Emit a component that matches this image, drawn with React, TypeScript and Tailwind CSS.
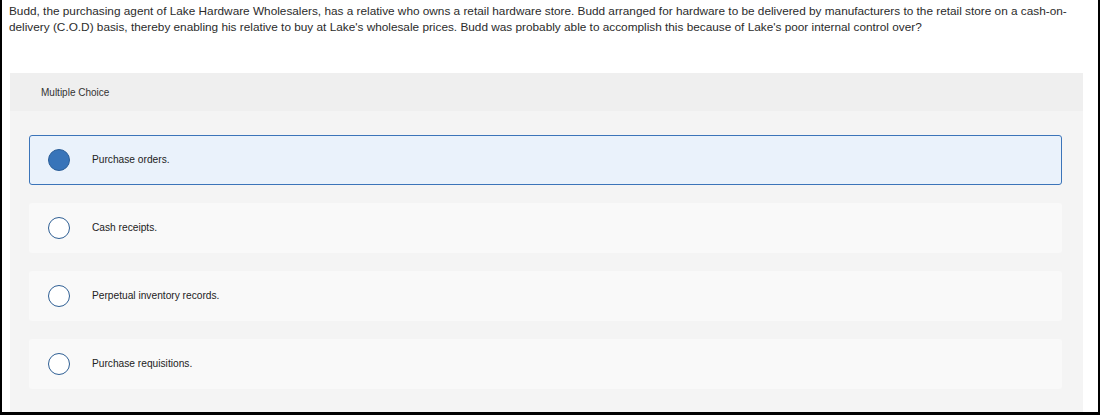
import { useState } from 'react';

const choices = [
  'Purchase orders.',
  'Cash receipts.',
  'Perpetual inventory records.',
  'Purchase requisitions.',
];

const App = () => {
  const [selected, setSelected] = useState(0);

  return (
    <div className="w-[1100px] h-[415px] overflow-hidden bg-white border-l-2 border-r-2 border-b-[3px] border-black font-['Liberation_Sans',Arial,sans-serif] text-[#333]">
      {/* Question */}
      <p className="pl-[7px] pr-[20px] pt-[3px] text-[11.8px] leading-[16px] text-[#2b2b2b]">
        Budd, the purchasing agent of Lake Hardware Wholesalers, has a relative who owns a retail hardware store. Budd arranged for hardware to be delivered by manufacturers to the retail store on a cash-on-delivery (C.O.D) basis, thereby enabling his relative to buy at Lake's wholesale prices. Budd was probably able to accomplish this because of Lake's poor internal control over?
      </p>

      {/* Answer panel */}
      <div className="mt-[38px] ml-[8px] mr-[15px] bg-[#f4f4f4] pb-6">
        <div className="h-[38px] flex items-center pl-[31px] bg-[#efefef] text-[10px] text-[#333]">
          Multiple Choice
        </div>

        <div className="flex flex-col gap-[18px] pt-[24px] pl-[19px] pr-[21px]">
          {choices.map((choice, i) => {
            const isSel = selected === i;
            return (
              <button
                key={choice}
                onClick={() => setSelected(i)}
                className={`h-[50px] flex items-center rounded-[3px] text-left ${
                  isSel ? 'bg-[#eaf2fb] border border-[#3b74b9]' : 'bg-[#f9f9f9] border border-transparent'
                }`}
              >
                <span
                  className={`ml-[18px] w-[22px] h-[22px] rounded-full shrink-0 border-[1.5px] ${
                    isSel ? 'bg-[#3874b9] border-[#2b5e98]' : 'bg-white border-[#2f5f94]'
                  }`}
                />
                <span className="ml-[22px] text-[10.2px] text-[#222]">{choice}</span>
              </button>
            );
          })}
        </div>
      </div>
    </div>
  );
};

export default App;
